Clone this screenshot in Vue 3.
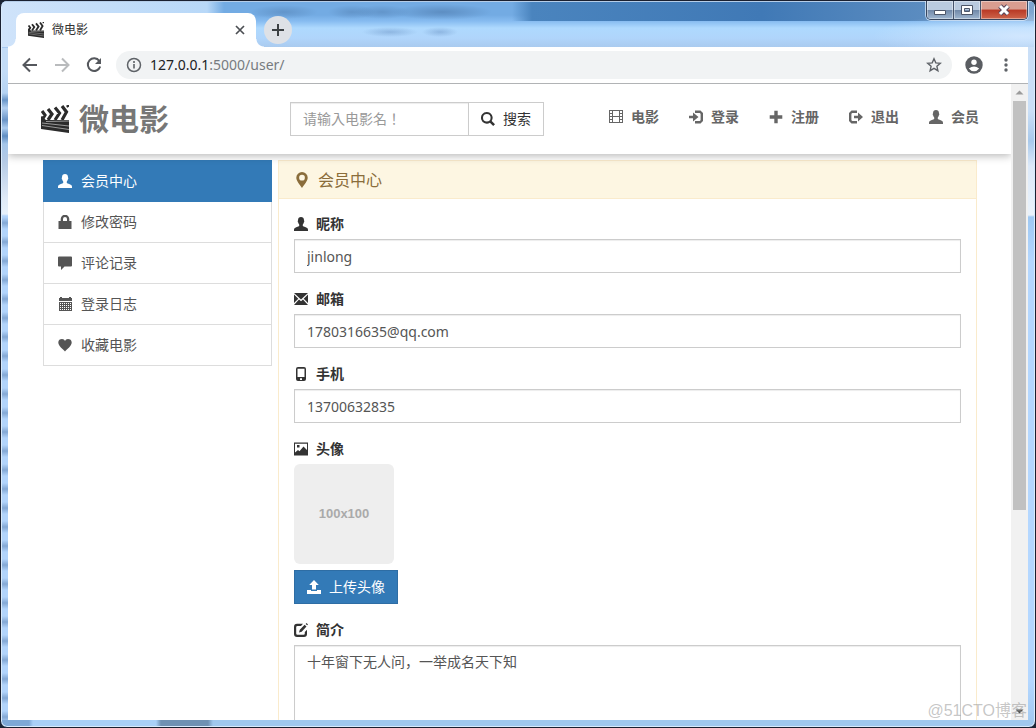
<script setup>
import { ref } from 'vue'

const calendarHoles = [6, 8, 10, 12]
  .map((y) => [2, 4, 6, 8, 10, 12].map((x) => `M${x} ${y}h1v1h-1z`).join(''))
  .join('')

const icons = {
  user: 'M4 3.300C4 1 5.200 0 7 0s3 1 3 3.300c0 .3.3.6.3 1.100 0 .6-.4.9-.5 1.200-.2.9-.6 1.500-1 2v1.400c.6.7 4.200 1.300 4.900 2.400.3.500.3 1.600.3 2.600H0c0-1 0-2.100.3-2.600C1 10.300 4.600 9.700 5.200 9V7.600c-.4-.5-.8-1.100-1-2C4.100 5.300 3.700 5 3.700 4.400c0-.5.3-.8.3-1.100z',
  lock: 'M.5 6h2.200V4a4.300 4.300 0 0 1 8.600 0v2h2.200v8H.5zM5 6h4V4a2 2 0 0 0-4 0z',
  comment: 'M1 .5h12q1 0 1 1v8q0 1-1 1H6.500L3 14v-3.500H1q-1 0-1-1v-8q0-1 1-1z',
  calendar: 'M2 0h2v1h7V0h2v1h1v3H1V1h1zM1 5h13v9H1z' + calendarHoles,
  heart: 'M7 13.500C5 11 .3 8 .3 4.500 .3 2 2 1 4 1c1.500 0 2.500.8 3 2 .5-1.200 1.500-2 3-2 2 0 3.700 1 3.700 3.500C13.700 8 9 11 7 13.500z',
  marker: 'M7 0a5 5 0 0 1 5 5c0 3-3.200 6-5 9C5.200 11 2 8 2 5a5 5 0 0 1 5-5zM7 2.500a2.500 2.500 0 1 0 0 5 2.500 2.500 0 0 0 0-5z',
  envelope: 'M0 1h14L7 7.500zM0 2.500l4.300 4.200L0 11zM14 2.500V11L9.700 6.700zM0 13l5-5.500 2 1.800 2-1.800 5 5.500z',
  phone: 'M4 0h6q2 0 2 2v10q0 2-2 2H4q-2 0-2-2V2q0-2 2-2zM3.500 1.800V10h7V1.800zM6 11.200h2V13H6z',
  picture: 'M0 .5h14v13H0zM1 1.800v8.700l3-2.500 1.500 1.200L9.500 4.500 13 8V1.800zM3 3h2.500v2.500H3z',
  upload: 'M7 0l4.800 5H9v4.500H5V5H2.200zM0 10h4v1h6v-1h4v4H0z',
  edit: 'M9 .8L7 3H3.500Q2.200 3 2.200 4.200v6.300q0 1.300 1.300 1.300h6q1.300 0 1.300-1.300V9L13 6.800V11q0 3-3 3H3q-3 0-3-3V4Q0 .8 3 .8zM10.600 1.700l1.900 1.900L7.700 8.800 5 9.500l.8-2.700zM12.600 0L14 1.400l-.8.9L11.600.9z',
  film: 'M0 0h14v13H0zM4 1v5h6V1zM4 7v5h6V7zM1 1v2h2V1zM1 4v2h2V4zM1 7v2h2V7zM1 10v2h2v-2zM11 1v2h2V1zM11 4v2h2V4zM11 7v2h2V7zM11 10v2h2v-2z',
  login: 'M6 .5h5.500L14 3v8l-2.500 2.500H6v-2.400h4.700l.9-.9V3.800l-.9-.9H6zM0 5.700h4V2.500L9.500 7 4 11.500V8.300H0z',
  logout: 'M8 .5H2.500L0 3v8l2.500 2.500H8v-2.400H3.300l-.9-.9V3.800l.9-.9H8zM5 5.700h4V2.500L14 7l-5 4.500V8.300H5z',
  plus: 'M5.300.8h3.400v4.500h4.600v3.400H8.700v4.600H5.300V8.700H.7V5.300h4.600z',
  search: 'M5.800 0a5.800 5.800 0 0 1 4.900 8.900L14 12.200 12.200 14 8.900 10.700A5.800 5.800 0 1 1 5.800 0zM5.800 2a3.800 3.800 0 1 0 0 7.600 3.800 3.800 0 0 0 0-7.600z'
}

const nav = [
  { icon: 'film', text: '电影' },
  { icon: 'login', text: '登录' },
  { icon: 'plus', text: '注册' },
  { icon: 'logout', text: '退出' },
  { icon: 'user', text: '会员' }
]

const menu = [
  { icon: 'user', text: '会员中心', active: true },
  { icon: 'lock', text: '修改密码' },
  { icon: 'comment', text: '评论记录' },
  { icon: 'calendar', text: '登录日志' },
  { icon: 'heart', text: '收藏电影' }
]

const fields = ref([
  { id: 'name', icon: 'user', label: '昵称', value: 'jinlong' },
  { id: 'email', icon: 'envelope', label: '邮箱', value: '1780316635@qq.com' },
  { id: 'phone', icon: 'phone', label: '手机', value: '13700632835' }
])

const info = ref('十年窗下无人问，一举成名天下知')
const keyword = ref('')
</script>

<template>
  <div class="window">
    <svg class="defs" aria-hidden="true">
      <symbol id="clapper" viewBox="0 0 28 28">
        <path d="M1 6l3 4-3 5M7 4l4 5-4 6M14 2.500l4.500 5.500-4.500 7M21 1l4.500 6-4.500 8M26.500 0l1 2" fill="none" stroke="#2b2b2b" stroke-width="3.200" />
        <path d="M0 11l5 4h23v13L0 24z" fill="#2b2b2b" />
        <path d="M5 16.500l23-.5M1 18l27 3M1 20.500l27 4" stroke="#b5b5b5" stroke-width=".8" />
      </symbol>
    </svg>

    <div class="titlebar">
      <div class="tab">
        <svg class="favicon" aria-hidden="true"><use href="#clapper" /></svg>
        <span class="tab-title">微电影</span>
        <button class="plain tab-close" aria-label="关闭标签页">
          <svg width="10" height="10" viewBox="0 0 10 10"><path d="M1 1l8 8M9 1L1 9" stroke="#4c4f53" stroke-width="1.700" /></svg>
        </button>
      </div>
      <button class="plain new-tab" aria-label="新标签页">
        <svg width="12" height="12" viewBox="0 0 12 12"><path d="M6 0v12M0 6h12" stroke="#3c4043" stroke-width="2" /></svg>
      </button>
      <div class="controls">
        <button class="plain ctl" aria-label="最小化">
          <svg width="14" height="14" viewBox="0 0 14 14"><path d="M1.500 7.500h11v4h-11z" fill="#fff" stroke="#4d5669" /></svg>
        </button>
        <button class="plain ctl" aria-label="最大化">
          <svg width="14" height="14" viewBox="0 0 14 14"><path d="M1.500 2.500h11v9h-11zM4.500 5.500h5v3h-5z" fill="#fff" fill-rule="evenodd" stroke="#4d5669" /></svg>
        </button>
        <button class="plain ctl close" aria-label="关闭">
          <svg width="14" height="14" viewBox="0 0 14 14"><path d="M3 3l8 8M11 3l-8 8" stroke="#59465a" stroke-width="5" /><path d="M3 3l8 8M11 3l-8 8" stroke="#fff" stroke-width="3" /></svg>
        </button>
      </div>
    </div>

    <div class="browser">
      <div class="toolbar">
        <button class="plain tool" aria-label="后退">
          <svg width="16" height="16" viewBox="0 0 16 16"><path d="M15 8H2M8 1.500L1.500 8 8 14.500" fill="none" stroke="#55585d" stroke-width="2" /></svg>
        </button>
        <button class="plain tool" aria-label="前进">
          <svg width="16" height="16" viewBox="0 0 16 16"><path d="M1 8h13M8 1.500L14.500 8 8 14.500" fill="none" stroke="#b9bbbd" stroke-width="2" /></svg>
        </button>
        <button class="plain tool" aria-label="刷新">
          <svg width="16" height="16" viewBox="0 0 16 16"><path d="M13.300 4A6.300 6.300 0 1 0 14.200 9.500" fill="none" stroke="#55585d" stroke-width="2" /><path d="M15 1v6H9z" fill="#55585d" /></svg>
        </button>
        <div class="omnibox">
          <svg width="16" height="16" viewBox="0 0 16 16"><circle cx="8" cy="8" r="6.500" fill="none" stroke="#5f6368" stroke-width="1.500" /><path d="M8 7v4.500M8 4v2" stroke="#5f6368" stroke-width="1.600" /></svg>
          <span class="url"><b>127.0.0.1</b>:5000/user/</span>
          <svg width="16" height="16" viewBox="0 0 16 16"><path d="M8 1.800l1.800 4.100 4.500.4-3.400 3 1 4.400L8 11.400l-3.900 2.300 1-4.400-3.400-3 4.500-.4z" fill="none" stroke="#5f6368" stroke-width="1.400" /></svg>
        </div>
        <button class="plain profile" aria-label="用户">
          <svg width="18" height="18" viewBox="0 0 18 18"><circle cx="9" cy="9" r="8.700" fill="#5a5d62" /><circle cx="9" cy="6.300" r="2.700" fill="#fff" /><path d="M3.800 12.500q5.200-4 10.400 0Q12 15.300 9 15.300t-5.200-2.800z" fill="#fff" /></svg>
        </button>
        <button class="plain more" aria-label="菜单">
          <svg width="4" height="14" viewBox="0 0 4 14"><g fill="#5f6368"><circle cx="2" cy="2" r="1.700" /><circle cx="2" cy="7" r="1.700" /><circle cx="2" cy="12" r="1.700" /></g></svg>
        </button>
      </div>

      <div class="viewport">
        <div class="page">
          <header class="header">
            <a class="brand" href="#">
              <svg class="brand-icon" aria-hidden="true"><use href="#clapper" /></svg>
              <span>微电影</span>
            </a>
            <form class="search" @submit.prevent>
              <input v-model="keyword" class="search-input" placeholder="请输入电影名！" aria-label="请输入电影名" />
              <button class="search-btn">
                <svg class="icon" viewBox="0 0 14 14"><path :d="icons.search" fill-rule="evenodd" /></svg>搜索
              </button>
            </form>
            <nav class="nav">
              <a v-for="n in nav" :key="n.text" href="#">
                <svg class="icon" viewBox="0 0 14 14"><path :d="icons[n.icon]" fill-rule="evenodd" /></svg>{{ n.text }}
              </a>
            </nav>
          </header>

          <main class="content">
            <nav class="side">
              <a v-for="m in menu" :key="m.text" href="#" :class="{ active: m.active }">
                <svg class="icon" viewBox="0 0 14 14"><path :d="icons[m.icon]" fill-rule="evenodd" /></svg>{{ m.text }}
              </a>
            </nav>

            <section class="panel">
              <h3 class="panel-heading">
                <svg class="icon marker" viewBox="0 0 14 14"><path :d="icons.marker" fill-rule="evenodd" /></svg>会员中心
              </h3>
              <form class="panel-body" @submit.prevent>
                <div v-for="f in fields" :key="f.id" class="group">
                  <label class="label" :for="f.id">
                    <svg class="icon" viewBox="0 0 14 14"><path :d="icons[f.icon]" fill-rule="evenodd" /></svg>{{ f.label }}
                  </label>
                  <input :id="f.id" v-model="f.value" class="control" />
                </div>
                <div class="group">
                  <label class="label" for="avatar">
                    <svg class="icon" viewBox="0 0 14 14"><path :d="icons.picture" fill-rule="evenodd" /></svg>头像
                  </label>
                  <div class="avatar">100x100</div>
                  <button id="avatar" class="upload" type="button">
                    <svg class="icon" viewBox="0 0 14 14"><path :d="icons.upload" /></svg>上传头像
                  </button>
                </div>
                <div class="group">
                  <label class="label" for="info">
                    <svg class="icon" viewBox="0 0 14 14"><path :d="icons.edit" fill-rule="evenodd" /></svg>简介
                  </label>
                  <textarea id="info" v-model="info" class="control area" rows="10"></textarea>
                </div>
              </form>
            </section>
          </main>
        </div>
        <div class="scrollbar" aria-hidden="true">
          <svg viewBox="0 0 17 17"><path d="M4.500 10.500h8l-4-4z" fill="#9b9b9b" /></svg>
          <div class="track"><div class="thumb"></div></div>
          <svg viewBox="0 0 17 17"><path d="M4.500 6.500h8l-4 4z" fill="#505050" /></svg>
        </div>
      </div>
    </div>
    <div class="watermark">@51CTO博客</div>
  </div>
</template>

<style>
body {
  margin: 0;
  background: #1c2433;
}
</style>

<style scoped>
.window,
.window * {
  box-sizing: border-box;
}
.window {
  position: relative;
  display: flex;
  flex-direction: column;
  height: 100vh;
  padding: 0 7px 7px;
  overflow: hidden;
  border: 1px solid #1a2030;
  border-radius: 7px;
  box-shadow: inset 0 0 0 1px #d9ebfc;
  font-family: "Noto Sans", "Noto Sans CJK SC", sans-serif;
  font-size: 14px;
  line-height: 20px;
  color: #333;
  background:
    linear-gradient(90deg, #7ea8d6 0 28px, #a9d0f7 32px 155px, #6f91b3 160px 207px, #a0c8ee 212px) 0 100% / 100% 7px no-repeat,
    linear-gradient(#c3dcf7 0 24px, #b5d3f3 45px, #6a96c8 52px, #b4d0f0 60px, #6a94c6 72px, #adcdf0 80px, #5f8dc2 88px, #a5c6ea 96px, #b3c9e5 112px, #dfe9f6 150px, #e8f1fb 166px, transparent 168px) 0 47px / 7px 100% no-repeat,
    repeating-linear-gradient(#b2d4fb 0 7px, #84a8d4 13px, #b2d4fb 19px) 0 0 / 7px 100% no-repeat,
    linear-gradient(#cadff7 0 110px, #a8c9ec 140px, #dce9f9 165px, #eaf2fb 214px, #9ec8f3 216px, #b4d7ff 260px 680px, #a0c8f0) 100% 0 / 7px 100% no-repeat,
    #b2d4fb;
}
.defs {
  position: absolute;
  width: 0;
  height: 0;
}
.plain {
  display: flex;
  align-items: center;
  justify-content: center;
  padding: 0;
  border: 0;
  background: none;
}
.titlebar {
  display: flex;
  flex: none;
  height: 46px;
  margin: 0 -6px;
  padding: 0 6px;
  border-top: 1px solid #b5cde8;
  background:
    radial-gradient(ellipse 150px 24px at 1020px 34px, rgba(220, 236, 255, .75), transparent),
    radial-gradient(ellipse 24px 7px at 350px 10px, rgba(60, 98, 145, .3), transparent),
    radial-gradient(ellipse 34px 7px at 282px 10px, rgba(60, 98, 145, .3), transparent),
    radial-gradient(ellipse 28px 7px at 380px 10px, rgba(60, 98, 145, .3), transparent),
    radial-gradient(ellipse 50px 8px at 440px 10px, rgba(60, 98, 145, .4), transparent),
    radial-gradient(ellipse 28px 5px at 388px 30px, rgba(80, 120, 175, .35), transparent),
    radial-gradient(ellipse 18px 5px at 438px 30px, rgba(80, 120, 175, .35), transparent),
    linear-gradient(90deg, #cfe3fa, #b8d8f8 205px, transparent 222px),
    linear-gradient(90deg, transparent 510px, #4a84be 530px, #4079b6 760px, #5b8cc0 920px, #7fa6d0) 0 0 / 100% 19px no-repeat,
    linear-gradient(#73abe3 0 13px, #86bbf0 19px, #aed9fe 26px, #b0d5fb 36px, #aacbef);
}
.tab {
  position: relative;
  display: flex;
  align-items: center;
  gap: 8px;
  width: 240px;
  height: 34px;
  margin: 11px 8px 0;
  padding: 0 10px 0 12px;
  border-radius: 8px 8px 0 0;
  background: #fff;
}
.tab::before,
.tab::after {
  content: "";
  position: absolute;
  bottom: 0;
  width: 8px;
  height: 8px;
}
.tab::before {
  left: -8px;
  background: radial-gradient(circle at 0 0, transparent 7px, #fff 8px);
}
.tab::after {
  right: -8px;
  background: radial-gradient(circle at 100% 0, transparent 7px, #fff 8px);
}
.favicon {
  width: 16px;
  height: 16px;
}
.tab-title {
  flex: 1;
  font-size: 12px;
}
.tab-close {
  width: 12px;
  height: 20px;
}
.new-tab {
  width: 28px;
  height: 28px;
  margin-top: 14px;
  border-radius: 50%;
  background: #dee1e6;
}
.controls {
  display: flex;
  height: 19px;
  margin: -1px 0 0 auto;
  border: 1px solid #37465e;
  border-top: 0;
  border-radius: 0 0 5px 5px;
  overflow: hidden;
  box-shadow: 0 0 0 1px rgba(225, 240, 255, .7);
}
.ctl {
  width: 27px;
  border-right: 1px solid #46546c;
  background: linear-gradient(#b9cadf 0 48%, #7189a9 52%, #9fb6d0);
  box-shadow: inset 0 0 0 1px rgba(255, 255, 255, .4);
}
.ctl svg {
  flex: none;
}
.ctl.close {
  width: 46px;
  border-right: 0;
  background: linear-gradient(#d99d90 0 45%, #b83925 50%, #ce654b);
}
.browser {
  display: flex;
  flex: 1;
  flex-direction: column;
  min-height: 0;
  background: #fff;
}
.toolbar {
  display: flex;
  flex: none;
  align-items: center;
  height: 37px;
  padding: 0 20px 0 14px;
  border-bottom: 1px solid #b1b3b5;
}
.tool {
  width: 16px;
  height: 28px;
  margin-right: 16px;
}
.omnibox {
  display: flex;
  flex: 1;
  align-items: center;
  height: 28px;
  margin-left: -2px;
  margin-right: 13px;
  padding: 0 10px;
  border-radius: 14px;
  background: #f1f3f4;
}
.url {
  flex: 1;
  margin-left: 8px;
  color: #777b80;
}
.url b {
  font-weight: 400;
  color: #202124;
}
.more {
  margin-left: 21px;
}
.viewport {
  display: flex;
  flex: 1;
  min-height: 0;
}
.page {
  flex: 1;
  min-width: 0;
  overflow: hidden;
}
.header {
  position: relative;
  display: flex;
  height: 70px;
  padding: 0 17px 0 33px;
  background: #fff;
  box-shadow: 0 2px 8px rgba(0, 0, 0, .28);
}
.brand {
  display: flex;
  align-items: center;
  gap: 10px;
  width: 249px;
  font-size: 30px;
  font-weight: 700;
  line-height: 70px;
  color: #777;
  text-decoration: none;
}
.brand-icon {
  width: 28px;
  height: 28px;
}
.icon {
  flex: none;
  width: 14px;
  height: 14px;
  fill: currentColor;
}
.search {
  display: flex;
  width: 254px;
  height: 34px;
  margin-top: 18px;
}
.search-input {
  flex: 1;
  min-width: 0;
  padding: 0 12px;
  border: 1px solid #ccc;
  border-right: 0;
  border-radius: 0;
  box-shadow: inset 0 1px 1px rgba(0, 0, 0, .075);
  font: inherit;
  font-family: "Noto Sans", "Noto Sans CJK TC", sans-serif;
  color: #555;
  outline: 0;
}
.search-input::placeholder {
  color: #999;
}
.search-btn {
  display: flex;
  align-items: center;
  gap: 8px;
  padding: 0 12px;
  border: 1px solid #ccc;
  background: #fff;
  font: inherit;
  color: #333;
}
.nav {
  display: flex;
  height: 66px;
  margin-left: auto;
}
.nav a {
  display: flex;
  align-items: center;
  gap: 8px;
  width: 80px;
  padding: 0 15px;
  font-weight: 700;
  color: #666;
  text-decoration: none;
  white-space: nowrap;
}
.content {
  display: grid;
  grid-template-columns: 229px 1fr;
  align-items: start;
  gap: 6px;
  padding: 6px 34px 0 35px;
}
.side {
  border: 1px solid #ddd;
  border-top: 0;
}
.side a {
  display: flex;
  align-items: center;
  gap: 9px;
  height: 41px;
  padding: 0 14px;
  border-bottom: 1px solid #ddd;
  color: #555;
  text-decoration: none;
}
.side a:last-child {
  height: 40px;
  border-bottom: 0;
}
.side .active {
  height: 42px;
  margin: 0 -1px;
  padding: 0 15px;
  border-color: #337ab7;
  background: #337ab7;
  color: #fff;
}
.panel {
  border: 1px solid #faebcc;
}
.panel-heading {
  display: flex;
  align-items: center;
  gap: 8px;
  height: 38px;
  margin: 0;
  padding: 0 15px;
  border-bottom: 1px solid #faebcc;
  background: #fdf6e2;
  color: #8a6d3b;
  font-size: 16px;
  font-weight: 400;
}
.panel-heading .icon {
  width: 16px;
  height: 16px;
}
.panel-body {
  padding: 15px;
}
.group {
  display: flex;
  flex-direction: column;
  align-items: flex-start;
  margin-bottom: 16px;
}
.label {
  display: flex;
  align-items: center;
  gap: 8px;
  margin-bottom: 5px;
  font-weight: 700;
}
.control {
  width: 100%;
  height: 34px;
  padding: 6px 12px;
  border: 1px solid #ccc;
  border-radius: 0;
  box-shadow: inset 0 1px 1px rgba(0, 0, 0, .075);
  background: #fff;
  font: inherit;
  color: #555;
  outline: 0;
}
.area {
  display: block;
  height: 214px;
  resize: none;
}
.avatar {
  display: flex;
  align-items: center;
  justify-content: center;
  width: 100px;
  height: 100px;
  margin-bottom: 6px;
  border-radius: 6px;
  background: #eee;
  color: #aaa;
  font-family: "Liberation Sans", sans-serif;
  font-size: 13px;
  font-weight: 700;
}
.upload {
  display: flex;
  align-items: center;
  gap: 8px;
  height: 34px;
  padding: 0 12px;
  border: 1px solid #2e6da4;
  background: #337ab7;
  font: inherit;
  color: #fff;
}
.scrollbar {
  display: flex;
  flex: none;
  flex-direction: column;
  width: 17px;
  background: #f1f1f1;
}
.track {
  flex: 1;
  padding: 0 2px;
}
.thumb {
  height: 68%;
  background: #c1c1c1;
}
.watermark {
  position: absolute;
  right: 8px;
  bottom: 6px;
  color: rgba(150, 150, 150, .55);
  font-family: "Liberation Sans", "Noto Sans CJK SC", sans-serif;
  font-size: 16px;
  pointer-events: none;
}
</style>
